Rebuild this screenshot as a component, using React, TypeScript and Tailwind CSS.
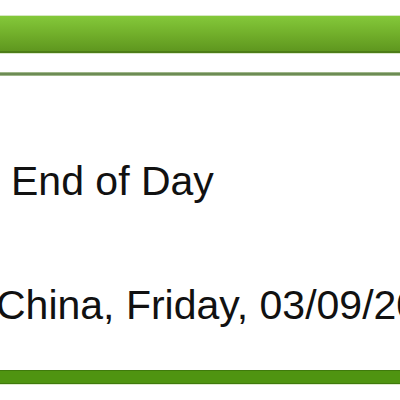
export default function App() {
  return (
    <div className="w-[400px] h-[400px] bg-white overflow-hidden flex flex-col font-['Liberation_Sans',Arial,sans-serif] text-[#111111]">
      {/* header bar */}
      <div className="mt-[15px] h-[1px] bg-[#d6e8c2]" />
      <div className="h-[37px] bg-gradient-to-b from-[#84c83a] via-[#72b02b] to-[#5f971f] border-b-2 border-[#4d7d18]" />
      <div className="h-[1px] bg-[#dbe9cc]" />

      {/* divider rule */}
      <div className="mt-[18px] h-[4px] bg-gradient-to-b from-[#b9cda6] via-[#55773a] to-[#b9cda6]" />

      <div className="mt-[82px] pl-[11px] text-[41px] leading-[46px] whitespace-nowrap">
        End of Day
      </div>

      <div className="mt-[78px] -ml-[4px] text-[41px] leading-[46px] whitespace-nowrap">
        China, Friday, 03/09/2012
      </div>

      {/* footer bar */}
      <div className="mt-[42px] h-[14px] bg-[#4f9411] border-y border-[#3f7a0c]" />
      <div className="h-[1px] bg-[#dfeccd]" />
    </div>
  )
}
